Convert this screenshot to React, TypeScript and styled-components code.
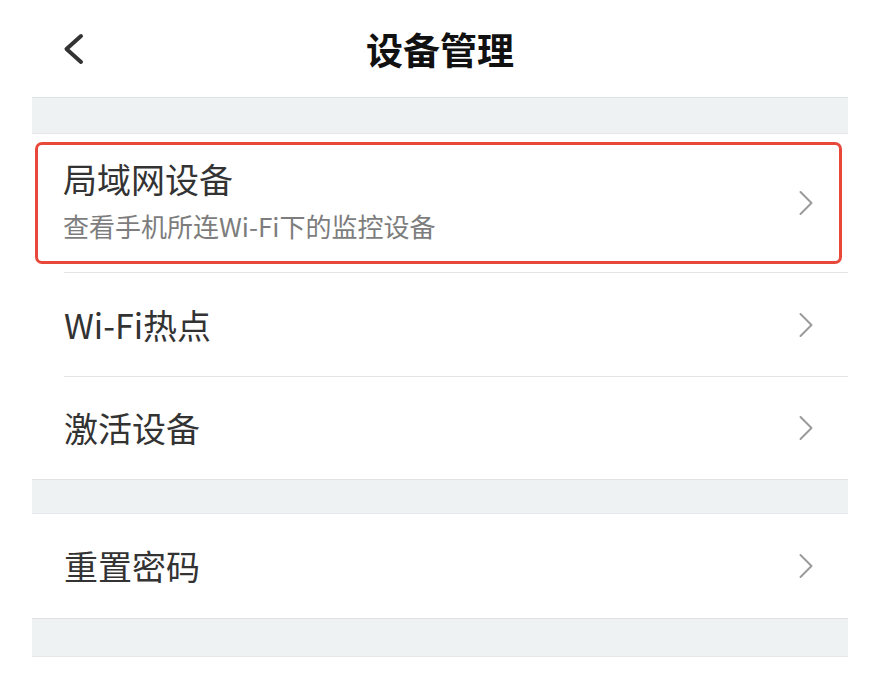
import React from "react";
import styled, { createGlobalStyle } from "styled-components";

const GlobalStyle = createGlobalStyle`
  html, body {
    margin: 0;
    padding: 0;
    background: #ffffff;
  }
  body {
    font-family: "Noto Sans CJK SC", "Noto Sans", sans-serif;
    -webkit-font-smoothing: antialiased;
  }
`;

const Page = styled.div`
  width: 816px;
  margin-left: 32px;
  display: flex;
  flex-direction: column;
`;

const Header = styled.header`
  height: 97px;
  display: grid;
  grid-template-columns: 1fr auto 1fr;
  align-items: center;
  padding: 1px 30px 0;
  box-sizing: border-box;
`;

const BackButton = styled.button`
  justify-self: start;
  width: 22px;
  height: 34px;
  padding: 0;
  border: none;
  background: transparent;
  display: flex;
  color: #333333;
`;

const Title = styled.h1`
  margin: 0;
  font-size: 37px;
  line-height: 48px;
  font-weight: 700;
  color: #111111;
`;

const Band = styled.div<{ $h: number }>`
  height: ${(p) => p.$h}px;
  box-sizing: border-box;
  background: #eff2f3;
  border-top: 1px solid #dfe3e6;
  border-bottom: 1px solid #e4e8ea;
`;

const HighlightRow = styled.div`
  height: 138px;
  box-sizing: border-box;
  padding: 8px 6px 8px 3px;
`;

const HighlightBox = styled.div`
  height: 100%;
  box-sizing: border-box;
  border: 3px solid #e8483a;
  border-radius: 7px;
  display: flex;
  align-items: center;
  padding: 0 25px 0 25px;
`;

const TextStack = styled.div`
  flex: 1;
  display: flex;
  flex-direction: column;
  gap: 12px;
  padding-bottom: 6px;
`;

const Row = styled.div`
  padding-left: 32px;
`;

const RowBody = styled.div<{ $h: number; $divider?: boolean }>`
  height: ${(p) => p.$h}px;
  box-sizing: border-box;
  border-top: ${(p) => (p.$divider ? "1px solid #e3e6e8" : "none")};
  display: flex;
  align-items: center;
  padding-right: 34px;
`;

const Label = styled.span`
  flex: 1;
  font-size: 34px;
  line-height: 40px;
  color: #333333;
`;

const Sub = styled.span`
  font-size: 26px;
  line-height: 30px;
  color: #7d7d7d;
`;

const Chevron = () => (
  <svg width="16" height="26" viewBox="0 0 16 26" fill="none">
    <path
      d="M2.5 2 L13.5 13 L2.5 24"
      stroke="#9a9a9a"
      strokeWidth="2"
      strokeLinecap="round"
      strokeLinejoin="round"
    />
  </svg>
);

const BackIcon = () => (
  <svg width="22" height="34" viewBox="0 0 22 34" fill="none">
    <path
      d="M19 4 L4.5 17 L19 30"
      stroke="currentColor"
      strokeWidth="4"
      strokeLinecap="round"
      strokeLinejoin="round"
    />
  </svg>
);

export default function App() {
  return (
    <>
      <GlobalStyle />
      <Page>
        <Header>
          <BackButton aria-label="返回">
            <BackIcon />
          </BackButton>
          <Title>设备管理</Title>
          <span />
        </Header>
        <Band $h={37} />
        <HighlightRow>
          <HighlightBox>
            <TextStack>
              <Label>局域网设备</Label>
              <Sub>查看手机所连Wi-Fi下的监控设备</Sub>
            </TextStack>
            <Chevron />
          </HighlightBox>
        </HighlightRow>
        <Row>
          <RowBody $h={104} $divider>
            <Label>Wi-Fi热点</Label>
            <Chevron />
          </RowBody>
        </Row>
        <Row>
          <RowBody $h={103} $divider>
            <Label>激活设备</Label>
            <Chevron />
          </RowBody>
        </Row>
        <Band $h={35} />
        <Row>
          <RowBody $h={104}>
            <Label>重置密码</Label>
            <Chevron />
          </RowBody>
        </Row>
        <Band $h={39} />
      </Page>
    </>
  );
}
